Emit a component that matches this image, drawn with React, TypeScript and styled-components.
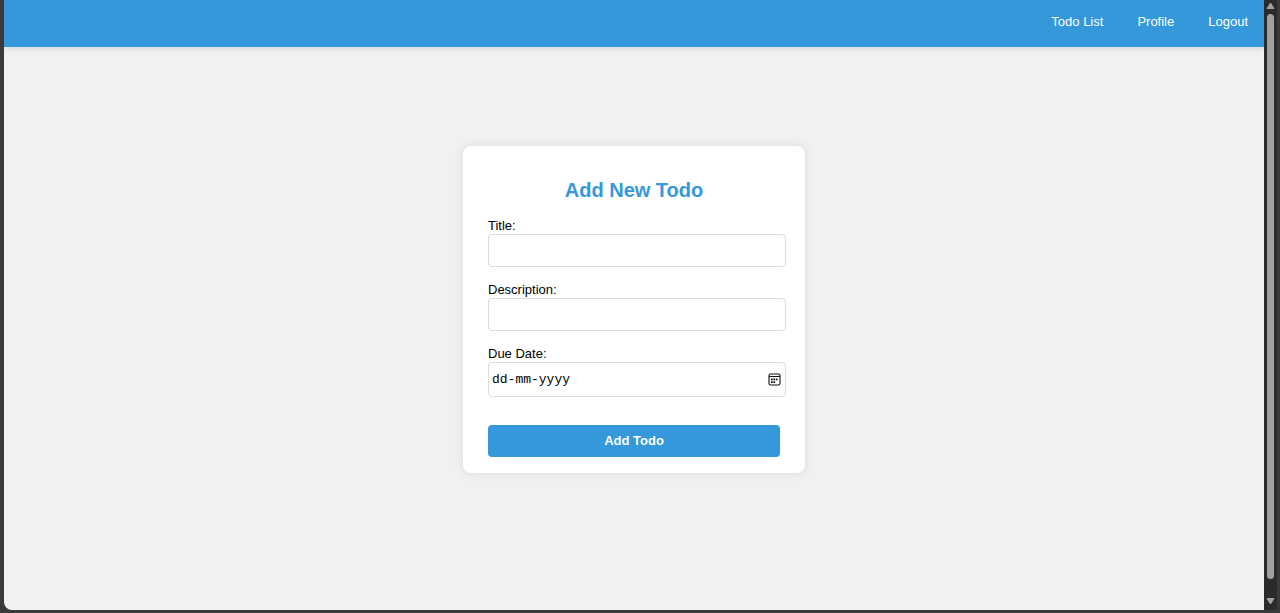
import React from "react";
import styled, { createGlobalStyle } from "styled-components";

const GlobalStyle = createGlobalStyle`
  * { box-sizing: border-box; }
  body {
    margin: 0;
    background: #3a3a3b;
    font-family: "Liberation Sans", Arial, sans-serif;
    font-size: 13px;
    line-height: 16px;
    color: #000;
  }
`;

const Frame = styled.div`
  display: flex;
  min-height: 100vh;
  padding: 0 3px 3px 4px;
`;

const Page = styled.div`
  flex: 1;
  display: flex;
  flex-direction: column;
  background: #f1f1f1;
  border-bottom-left-radius: 8px;
  overflow: hidden;
`;

const Header = styled.header`
  background: #3498db;
  padding: 14px 16px 17px;
  box-shadow: 0 2px 5px rgba(0, 0, 0, 0.1);
`;

const Nav = styled.nav`
  display: flex;
  justify-content: flex-end;
  gap: 34px;
`;

const NavLink = styled.a`
  color: #fff;
  text-decoration: none;
`;

const Main = styled.main`
  flex: 1;
  display: flex;
  align-items: center;
  justify-content: center;
  padding-bottom: 38px;
`;

const Card = styled.form`
  display: flex;
  flex-direction: column;
  gap: 15px;
  width: 342px;
  padding: 32px 25px 16px;
  background: #fff;
  border-radius: 8px;
  box-shadow: 0 0 10px rgba(0, 0, 0, 0.1);
`;

const Title = styled.h1`
  margin: 0 0 1px;
  color: #3498db;
  font-size: 20px;
  line-height: 24px;
  text-align: center;
`;

const Field = styled.div`
  display: flex;
  flex-direction: column;
`;

const InputWrap = styled.div<{ $tall?: boolean }>`
  box-sizing: content-box;
  display: flex;
  align-items: center;
  width: 100%;
  height: ${(p) => (p.$tall ? 33 : 31)}px;
  padding: 0 2px;
  border: 1px solid #dcdcdc;
  border-radius: 4px;
`;

const Input = styled.input<{ $mono?: boolean }>`
  flex: 1;
  min-width: 0;
  height: 100%;
  padding: 0 1px;
  border: 0;
  outline: 0;
  background: transparent;
  color: #000;
  font-family: ${(p) =>
    p.$mono ? '"Liberation Mono", monospace' : '"Liberation Sans", Arial, sans-serif'};
  font-size: 13px;

  &::placeholder {
    color: #000;
    opacity: 1;
  }
`;

const PickerButton = styled.button`
  display: flex;
  padding: 0 2px;
  border: 0;
  background: none;
  color: #111;
`;

const Submit = styled.button`
  height: 32px;
  margin-top: 13px;
  border: 0;
  border-radius: 4px;
  background: #3498db;
  color: #fff;
  font: bold 13px/16px "Liberation Sans", Arial, sans-serif;
`;

const ScrollTrack = styled.div`
  display: flex;
  flex-direction: column;
  align-items: center;
  width: 13px;
  padding: 2px 0 5px;
  background: #2b2b2c;
  color: #a0a0a0;
`;

const Thumb = styled.div`
  flex: 1;
  width: 7px;
  margin: 5px 0 19px;
  border-radius: 4px;
  background: #a0a0a0;
`;

const CalendarIcon = () => (
  <svg width="13" height="13" viewBox="0 0 13 13" fill="none" aria-hidden="true">
    <rect x="1" y="1" width="11" height="11" rx="1.6" stroke="currentColor" strokeWidth="1.1" />
    <path d="M1 3.5H12" stroke="currentColor" />
    <path
      d="M3 5.6h1.7v1.7H3zM5.4 5.6h1.7v1.7H5.4zM7.8 5.6h1.7v1.7H7.8zM3 8.2h1.7v1.7H3zM5.4 8.2h1.7v1.7H5.4z"
      fill="currentColor"
    />
  </svg>
);

const Arrow = ({ down = false }: { down?: boolean }) => (
  <svg width="9" height="7" viewBox="0 0 9 7" aria-hidden="true">
    <path
      d={down ? "M1 0.5H8L4.5 6z" : "M1 6.5H8L4.5 1z"}
      fill="currentColor"
      stroke="currentColor"
      strokeLinejoin="round"
    />
  </svg>
);

export default function App() {
  return (
    <>
      <GlobalStyle />
      <Frame>
        <Page>
          <Header>
            <Nav>
              <NavLink href="#todos">Todo List</NavLink>
              <NavLink href="#profile">Profile</NavLink>
              <NavLink href="#logout">Logout</NavLink>
            </Nav>
          </Header>
          <Main>
            <Card onSubmit={(e) => e.preventDefault()}>
              <Title>Add New Todo</Title>
              <Field>
                <label htmlFor="title">Title:</label>
                <InputWrap>
                  <Input id="title" type="text" />
                </InputWrap>
              </Field>
              <Field>
                <label htmlFor="description">Description:</label>
                <InputWrap>
                  <Input id="description" type="text" />
                </InputWrap>
              </Field>
              <Field>
                <label htmlFor="due">Due Date:</label>
                <InputWrap $tall>
                  <Input id="due" type="text" placeholder="dd-mm-yyyy" $mono />
                  <PickerButton type="button" aria-label="Choose date">
                    <CalendarIcon />
                  </PickerButton>
                </InputWrap>
              </Field>
              <Submit type="submit">Add Todo</Submit>
            </Card>
          </Main>
        </Page>
        <ScrollTrack>
          <Arrow />
          <Thumb />
          <Arrow down />
        </ScrollTrack>
      </Frame>
    </>
  );
}
